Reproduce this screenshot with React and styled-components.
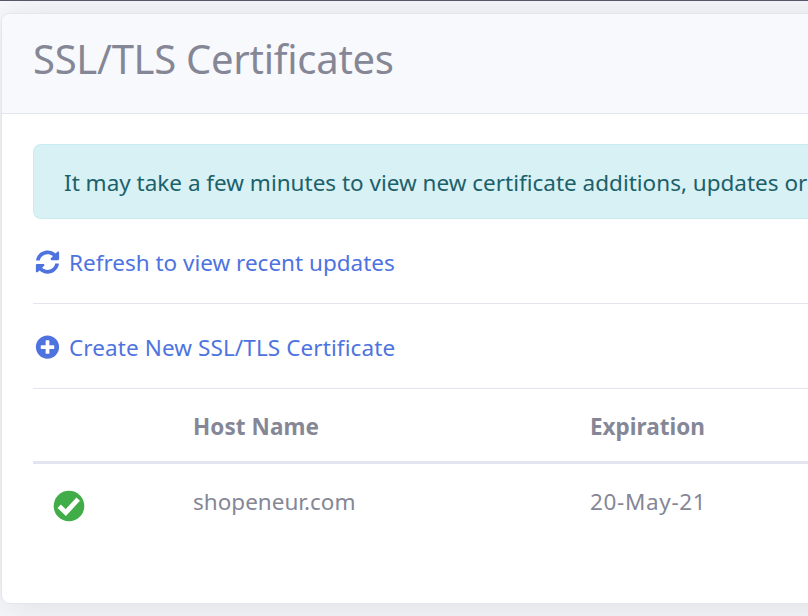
import React from "react";
import styled, { createGlobalStyle } from "styled-components";
import { FaSyncAlt, FaPlusCircle } from "react-icons/fa";

const GlobalStyle = createGlobalStyle`
  *, *::before, *::after { box-sizing: border-box; }
  body {
    margin: 0;
    overflow: hidden;
    background: #f8f9fc;
    color: #858796;
    font-family: "Noto Sans", "Open Sans", sans-serif;
    font-size: 22.5px;
    font-weight: 400;
    line-height: 36px;
  }
`;

const Page = styled.div`
  width: 808px;
  height: 616px;
  overflow: hidden;
  border-top: 1px solid #5a5469;
  padding: 12px 0 0 1px;
`;

const Card = styled.section`
  width: 1200px;
  height: 591px;
  background: #fff;
  border: 1px solid #e3e6f0;
  border-radius: 9px;
  box-shadow: 0 4px 42px rgba(58, 59, 69, 0.15);
  overflow: hidden;
`;

const CardHeader = styled.header`
  height: 100px;
  padding: 20px 31px 0;
  background: #f8f9fc;
  border-bottom: 1px solid #e3e6f0;
`;

const Title = styled.h1`
  margin: 0;
  font-size: 40px;
  font-weight: 400;
  line-height: 50px;
  letter-spacing: -0.28px;
  white-space: nowrap;
`;

const CardBody = styled.div`
  padding: 30px 0 0 31px;
`;

const Alert = styled.div`
  width: 775px;
  height: 75px;
  padding: 20px 0 20px 30px;
  background: #d7f1f5;
  border: 1px solid #c7ebf1;
  border-right: 0;
  border-radius: 8px 0 0 8px;
  color: #1c606a;
  white-space: nowrap;
`;

const ActionRow = styled.div`
  height: 85px;
  border-bottom: 1px solid #e3e6f0;
  padding: 26px 0 0 2px;
`;

const ActionLink = styled.a`
  display: inline-flex;
  align-items: center;
  gap: 9px;
  color: #4e73df;
  text-decoration: none;
  white-space: nowrap;

  svg { width: 25px; height: 24px; margin-bottom: 2px; }
`;

const Text = styled.span`
  letter-spacing: ${(p) => p.$tracking || "0"};
`;

const Row = styled.div`
  display: grid;
  grid-template-columns: 160px 397px 1fr;
  align-items: start;
  height: ${(p) => (p.$head ? "75px" : "80px")};
  padding-top: 20px;
  font-weight: ${(p) => (p.$head ? 700 : 400)};
  border-bottom: ${(p) => (p.$head ? "3px solid #e3e6f0" : "0")};
`;

const Status = styled.span`
  display: flex;
  padding: 6px 0 0 20px;
`;

function CheckBadge() {
  return (
    <svg width="32" height="32" viewBox="0 0 32 32" role="img" aria-label="Valid">
      <circle cx="16" cy="16" r="15.3" fill="#41ad49" />
      <path d="M6.2 16.2 12.8 22.6 25.2 9.2" fill="none" stroke="#fff" strokeWidth="4.8" />
    </svg>
  );
}

export default function App() {
  return (
    <>
      <GlobalStyle />
      <Page>
        <Card>
          <CardHeader>
            <Title>SSL/TLS Certificates</Title>
          </CardHeader>
          <CardBody>
            <Alert>
              <Text>It may take a few minutes to view new certificate additions, updates or</Text>
            </Alert>
            <ActionRow>
              <ActionLink href="#refresh">
                <FaSyncAlt />
                <Text>Refresh to view recent updates</Text>
              </ActionLink>
            </ActionRow>
            <ActionRow>
              <ActionLink href="#create">
                <FaPlusCircle />
                <Text $tracking="0.1px">Create New SSL/TLS Certificate</Text>
              </ActionLink>
            </ActionRow>
            <Row $head>
              <span />
              <Text $tracking="0.08px">Host Name</Text>
              <Text>Expiration</Text>
            </Row>
            <Row>
              <Status><CheckBadge /></Status>
              <Text>shopeneur.com</Text>
              <Text $tracking="0.65px">20-May-21</Text>
            </Row>
          </CardBody>
        </Card>
      </Page>
    </>
  );
}
